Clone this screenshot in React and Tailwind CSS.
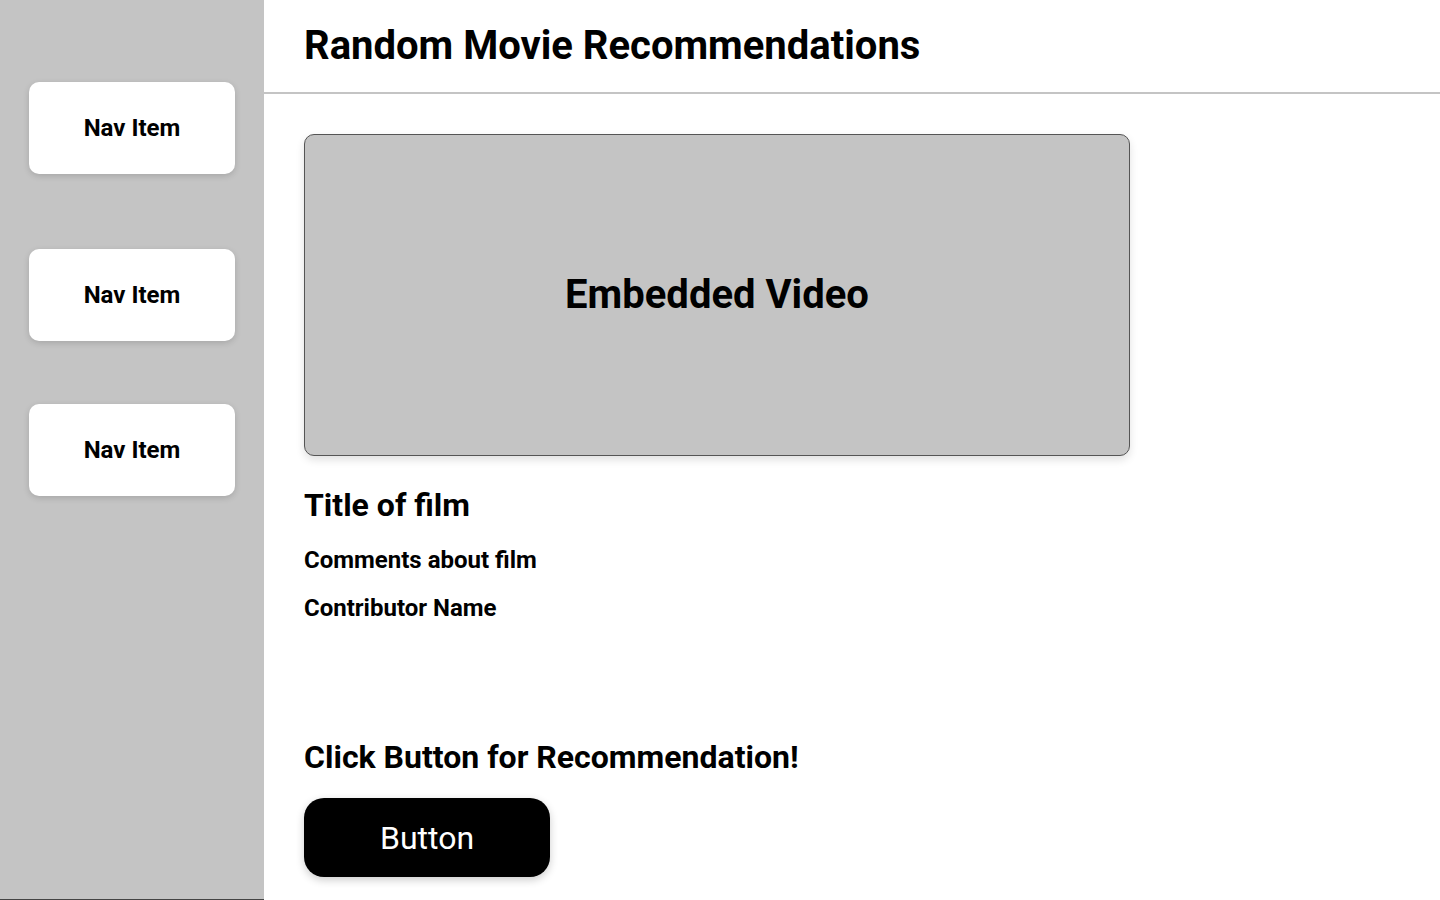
export default function App() {
  const navItems = ['Nav Item', 'Nav Item', 'Nav Item'];
  return (
    <div className="flex h-[900px] w-[1440px] bg-white font-['Roboto',sans-serif] text-black">
      {/* Sidebar */}
      <aside className="flex h-full w-[264px] shrink-0 flex-col border-b border-[#444] bg-[#c4c4c4] px-[29px] pt-[82px]">
        <div className="flex h-[92px] items-center justify-center rounded-[10px] bg-white text-[24px] font-bold shadow-[0_2px_6px_rgba(0,0,0,0.15)]">
          {navItems[0]}
        </div>
        <div className="mt-[75px] flex h-[92px] items-center justify-center rounded-[10px] bg-white text-[24px] font-bold shadow-[0_2px_6px_rgba(0,0,0,0.15)]">
          {navItems[1]}
        </div>
        <div className="mt-[63px] flex h-[92px] items-center justify-center rounded-[10px] bg-white text-[24px] font-bold shadow-[0_2px_6px_rgba(0,0,0,0.15)]">
          {navItems[2]}
        </div>
      </aside>

      {/* Main */}
      <main className="flex flex-1 flex-col">
        <header className="flex h-[94px] items-center border-b-2 border-[#c4c4c4] px-10">
          <h1 className="text-[40px] font-bold leading-none">Random Movie Recommendations</h1>
        </header>

        <div className="flex flex-col px-10 pt-10">
          <div className="flex h-[322px] w-[826px] items-center justify-center rounded-[10px] border border-[#555] bg-[#c4c4c4] shadow-[0_4px_8px_rgba(0,0,0,0.12)]">
            <span className="text-[40px] font-bold">Embedded Video</span>
          </div>

          <h2 className="mt-[29px] text-[32px] font-bold leading-[40px]">Title of film</h2>
          <p className="mt-[22px] text-[24px] font-bold leading-[26px]">Comments about film</p>
          <p className="mt-[22px] text-[24px] font-bold leading-[26px]">Contributor Name</p>

          <h2 className="mt-[116px] text-[32px] font-bold leading-[40px]">Click Button for Recommendation!</h2>
          <button className="mt-[21px] h-[79px] w-[246px] rounded-[20px] bg-black text-[32px] text-white shadow-[0_3px_8px_rgba(0,0,0,0.2)]">
            Button
          </button>
        </div>
      </main>
    </div>
  );
}
